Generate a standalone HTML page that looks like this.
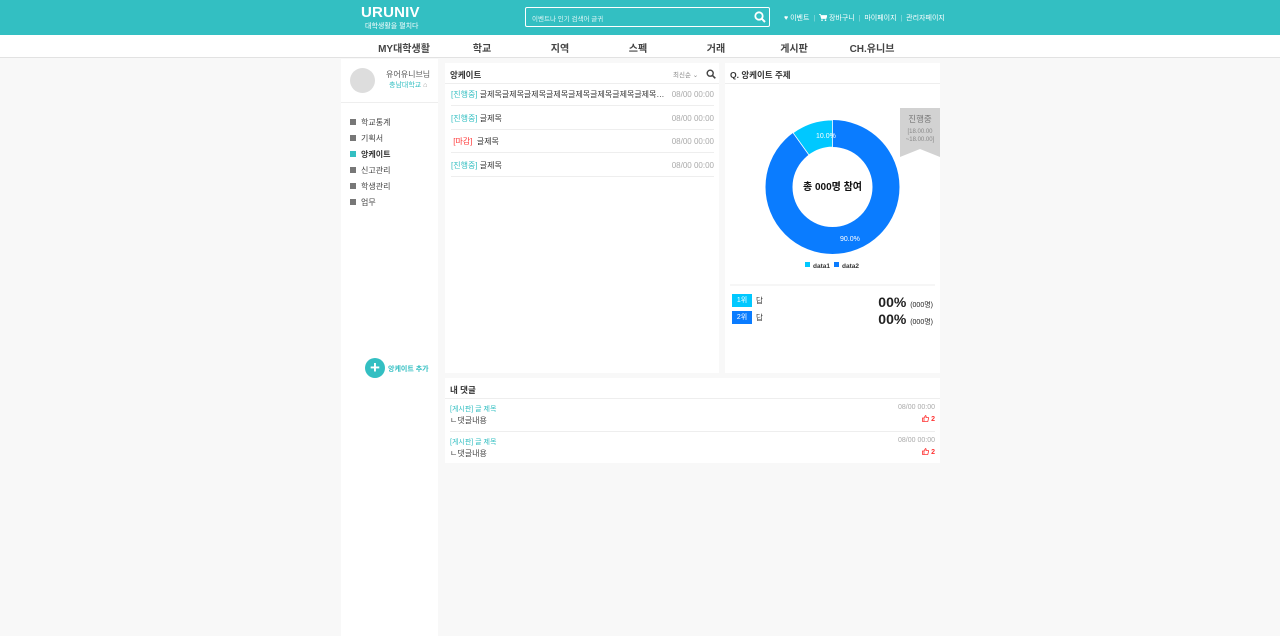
<!DOCTYPE html>
<html><head><meta charset="utf-8"><style>
*{margin:0;padding:0;box-sizing:border-box}
body{width:1280px;height:636px;background:#f8f8f8;font-family:"Liberation Sans","Noto Sans CJK KR",sans-serif;position:relative;overflow:hidden;color:#333}
.abs{position:absolute}
.hdr{left:0;top:0;width:1280px;height:35px;background:#33bfc2}
.nav{left:0;top:35px;width:1280px;height:23px;background:#fff;border-bottom:1px solid #e2e2e2}
.nav span{position:absolute;top:5px;font-size:10px;font-weight:bold;color:#444;transform:translateX(-50%)}
.panel{background:#fff}
.row{position:absolute;left:6px;right:5px;height:23px;border-bottom:1px solid #eee;font-size:8px;line-height:23px;white-space:nowrap}
.row .ti{display:inline-block;max-width:190px;overflow:hidden;text-overflow:ellipsis;vertical-align:top}
.t{color:#33bfc2}.g{color:#aaa}
.menu div{position:absolute;left:9px;font-size:8px;color:#444}
.menu div i{display:inline-block;width:6px;height:6px;background:#777;margin-right:5px;vertical-align:0}
</style></head><body>
<div class="abs hdr">
 <div class="abs" style="left:361px;top:4px;color:#fff;font-weight:bold;font-size:15px;letter-spacing:0.2px">URUNIV</div>
 <div class="abs" style="left:365px;top:21px;color:#fff;font-size:7px">대학생활을 펼치다</div>
 <div class="abs" style="left:525px;top:7px;width:245px;height:20px;border:1.5px solid #fff;border-radius:2px"></div>
 <div class="abs" style="left:532px;top:13px;color:#e0f6f6;font-size:6.5px">이벤트나 인기 검색어 글귀</div>
 <svg class="abs" style="left:754px;top:11px" width="12" height="12" viewBox="0 0 12 12"><circle cx="5" cy="5" r="3.7" fill="none" stroke="#fff" stroke-width="1.8"/><path d="M7.7 7.7L11 11" stroke="#fff" stroke-width="2"/></svg>
 <div class="abs" style="left:784px;top:13px;color:#fff;font-size:7px;white-space:nowrap">♥ 이벤트 <span style="opacity:.5">&nbsp;|&nbsp;</span> <svg width="8" height="7" viewBox="0 0 8 7" style="vertical-align:-1px"><path d="M0 0.5H1.5L2.5 4.5H7L8 1.5H2" fill="#fff" stroke="#fff" stroke-width="0.8"/><circle cx="3" cy="6.2" r="0.8" fill="#fff"/><circle cx="6.5" cy="6.2" r="0.8" fill="#fff"/></svg> 장바구니 <span style="opacity:.5">&nbsp;|&nbsp;</span> 마이페이지 <span style="opacity:.5">&nbsp;|&nbsp;</span> 관리자페이지</div>
</div>
<div class="abs nav">
 <span style="left:404px">MY대학생활</span><span style="left:482px">학교</span><span style="left:560px">지역</span><span style="left:638px">스펙</span><span style="left:716px">거래</span><span style="left:794px">게시판</span><span style="left:872px">CH.유니브</span>
</div>
<div class="abs panel" style="left:341px;top:59px;width:97px;height:577px">
 <div class="abs" style="left:9px;top:9px;width:25px;height:25px;border-radius:50%;background:#ddd"></div>
 <div class="abs" style="left:45px;top:10px;font-size:8px;color:#555">유어유니브님</div>
 <div class="abs" style="left:48px;top:21px;font-size:7px;color:#33bfc2">충남대학교 <span style="color:#999">⌂</span></div>
 <div class="abs" style="left:0;top:43px;width:97px;border-top:1px solid #eee"></div>
 <div class="menu">
  <div style="top:58px"><i></i>학교통계</div>
  <div style="top:74px"><i></i>기획서</div>
  <div style="top:90px;font-weight:bold;color:#333"><i style="background:#33bfc2"></i>앙케이트</div>
  <div style="top:106px"><i></i>신고관리</div>
  <div style="top:122px"><i></i>학생관리</div>
  <div style="top:138px"><i></i>업무</div>
 </div>
 <div class="abs" style="left:24px;top:299px;width:20px;height:20px;border-radius:50%;background:#33bfc2;color:#fff;font-size:17px;line-height:19px;text-align:center;font-weight:bold">+</div>
 <div class="abs" style="left:47px;top:305px;font-size:7px;color:#33bfc2;font-weight:bold">앙케이트 추가</div>
</div>
<div class="abs panel" style="left:445px;top:63px;width:274px;height:310px">
 <div class="abs" style="left:5px;top:6px;font-size:8.5px;font-weight:bold">앙케이트</div>
 <div class="abs" style="left:228px;top:6px;font-size:6.5px;color:#888">최신순 ⌄</div>
 <svg class="abs" style="left:261px;top:6px" width="10" height="10" viewBox="0 0 10 10"><circle cx="4.2" cy="4.2" r="3" fill="none" stroke="#444" stroke-width="1.4"/><path d="M6.4 6.4L9.3 9.3" stroke="#444" stroke-width="1.6"/></svg>
 <div class="abs" style="left:0;top:20px;width:274px;border-top:1px solid #eee"></div>
 <div class="row" style="top:20px"><span class="t">[진행중]</span> <span class="ti">글제목글제목글제목글제목글제목글제목글제목글제목글제목글제목</span><span class="g" style="position:absolute;right:0">08/00 00:00</span></div>
 <div class="row" style="top:44px"><span class="t">[진행중]</span> 글제목<span class="g" style="position:absolute;right:0">08/00 00:00</span></div>
 <div class="row" style="top:67px"><span style="color:#f33">&nbsp;[마감]</span>&nbsp; 글제목<span class="g" style="position:absolute;right:0">08/00 00:00</span></div>
 <div class="row" style="top:91px"><span class="t">[진행중]</span> 글제목<span class="g" style="position:absolute;right:0">08/00 00:00</span></div>
</div>
<div class="abs panel" style="left:725px;top:63px;width:215px;height:310px">
 <div class="abs" style="left:5px;top:6px;font-size:8.5px;font-weight:bold">Q. 앙케이트 주제</div>
 <div class="abs" style="left:0;top:20px;width:215px;border-top:1px solid #eee"></div>
 <svg class="abs" style="left:0;top:0" width="215" height="310">
  <circle cx="107.5" cy="124" r="53.5" fill="none" stroke="#0a7cff" stroke-width="27"/>
  <path d="M107.5 57 A67 67 0 0 0 68.1 69.8 L84 92 A40 40 0 0 1 107.5 84 Z" fill="#00c8ff" stroke="#fff" stroke-width="0.8"/>
  <text x="91" y="75" font-size="7" fill="#fff" font-family="Liberation Sans">10.0%</text>
  <text x="115" y="178" font-size="7" fill="#fff" font-family="Liberation Sans">90.0%</text>
  <text x="107.5" y="127" font-size="10" font-weight="bold" text-anchor="middle" fill="#111" font-family="Liberation Sans,Noto Sans CJK KR">총 000명 참여</text>
  <path d="M175 45H215V94L195 86L175 94Z" fill="#d2d2d2"/>
  <text x="195" y="59" font-size="8.5" text-anchor="middle" fill="#777" font-family="Liberation Sans,Noto Sans CJK KR">진행중</text>
  <text x="195" y="70" font-size="6" text-anchor="middle" fill="#888" font-family="Liberation Sans">[18.00.00</text>
  <text x="195" y="78" font-size="6" text-anchor="middle" fill="#888" font-family="Liberation Sans">~18.00.00]</text>
  <rect x="80" y="199" width="5" height="5" fill="#00c8ff"/><text x="88" y="205" font-size="6.5" font-weight="bold" fill="#333" font-family="Liberation Sans">data1</text>
  <rect x="109" y="199" width="5" height="5" fill="#0a7cff"/><text x="117" y="205" font-size="6.5" font-weight="bold" fill="#333" font-family="Liberation Sans">data2</text>
  <line x1="5" y1="222" x2="210" y2="222" stroke="#eee"/>
 </svg>
 <div class="abs" style="left:7px;top:231px;width:20px;height:13px;background:#00c8ff;color:#fff;font-size:7px;text-align:center;line-height:13px">1위</div>
 <div class="abs" style="left:31px;top:232px;font-size:7.5px">답</div>
 <div class="abs" style="left:7px;top:248px;width:20px;height:13px;background:#0a7cff;color:#fff;font-size:7px;text-align:center;line-height:13px">2위</div>
 <div class="abs" style="left:31px;top:249px;font-size:7.5px">답</div>
 <div class="abs" style="right:7px;top:231px;font-size:14px;font-weight:bold;color:#222">00% <span style="font-size:7px;font-weight:normal">(000명)</span></div>
 <div class="abs" style="right:7px;top:248px;font-size:14px;font-weight:bold;color:#222">00% <span style="font-size:7px;font-weight:normal">(000명)</span></div>
</div>
<div class="abs panel" style="left:445px;top:378px;width:495px;height:85px">
 <div class="abs" style="left:5px;top:6px;font-size:8.5px;font-weight:bold">내 댓글</div>
 <div class="abs" style="left:0;top:20px;width:495px;border-top:1px solid #eee"></div>
 <div class="abs" style="left:5px;top:26px;font-size:7px;color:#33bfc2">[게시판] 글 제목</div>
 <div class="abs" style="right:5px;top:26px;font-size:7px;color:#aaa">08/00 00:00</div>
 <div class="abs" style="left:5px;top:37px;font-size:8px;color:#444">ㄴ댓글내용</div>
 <div class="abs" style="right:5px;top:37px;font-size:7px;color:#f33;font-weight:bold"><svg width="7" height="7" viewBox="0 0 7 7" style="vertical-align:-1px"><path d="M0.5 3H2V6.5H0.5ZM2 3L3.5 0.5Q4.5 0.8 4 2.5H6.3Q6.8 2.8 6.5 3.5L5.8 6.5H2" fill="none" stroke="#f33" stroke-width="0.8"/></svg> 2</div>
 <div class="abs" style="left:5px;top:53px;width:485px;border-top:1px solid #eee"></div>
 <div class="abs" style="left:5px;top:59px;font-size:7px;color:#33bfc2">[게시판] 글 제목</div>
 <div class="abs" style="right:5px;top:59px;font-size:7px;color:#aaa">08/00 00:00</div>
 <div class="abs" style="left:5px;top:70px;font-size:8px;color:#444">ㄴ댓글내용</div>
 <div class="abs" style="right:5px;top:70px;font-size:7px;color:#f33;font-weight:bold"><svg width="7" height="7" viewBox="0 0 7 7" style="vertical-align:-1px"><path d="M0.5 3H2V6.5H0.5ZM2 3L3.5 0.5Q4.5 0.8 4 2.5H6.3Q6.8 2.8 6.5 3.5L5.8 6.5H2" fill="none" stroke="#f33" stroke-width="0.8"/></svg> 2</div>
</div>
</body></html>
